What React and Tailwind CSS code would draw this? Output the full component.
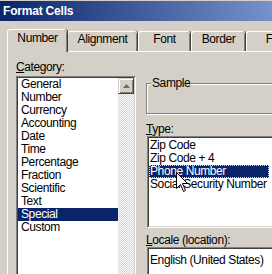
import React from "react";

const categories = [
  "General",
  "Number",
  "Currency",
  "Accounting",
  "Date",
  "Time",
  "Percentage",
  "Fraction",
  "Scientific",
  "Text",
  "Special",
  "Custom",
];

const types = ["Zip Code", "Zip Code + 4", "Phone Number", "Social Security Number"];

function Tab({ label, active, className }) {
  if (active) {
    return (
      <div
        className={`relative z-10 -mb-px h-[23px] shrink-0 rounded-t-[3px] border-l border-t border-white bg-[#d4d0c8] pt-[2px] text-center leading-[13px] shadow-[1px_0_0_#404040,inset_-1px_0_0_#808080] ${className}`}
      >
        {label}
      </div>
    );
  }
  return (
    <div
      className={`h-[20px] shrink-0 rounded-t-[3px] border-l border-t border-white pt-[1px] text-center leading-[13px] shadow-[1px_0_0_#404040,inset_-1px_0_0_#808080] ${className}`}
    >
      {label}
    </div>
  );
}

// classic sunken frame: dark outer top/left, white outer bottom/right
function Sunken({ className, children }) {
  return (
    <div className={`border border-t-[#808080] border-l-[#808080] border-b-white border-r-white ${className}`}>
      <div className="h-full border border-t-[#404040] border-l-[#404040] border-b-[#d4d0c8] border-r-[#d4d0c8] bg-white">
        {children}
      </div>
    </div>
  );
}

export default function App() {
  return (
    <div className="relative h-[274px] w-[272px] overflow-hidden bg-[#d4d0c8] font-['Liberation_Sans',Arial,sans-serif] text-[12px] tracking-[-0.4px] text-black">
      {/* title bar */}
      <div className="mt-px flex h-[20px] items-center bg-[linear-gradient(to_right,#0a246a,#7592ca)] pl-[3px] text-[12px] font-bold tracking-[-0.2px] text-white">
        Format Cells
      </div>

      {/* tabs */}
      <div className="mt-[8px] flex h-[22px] items-end pl-[7px]">
        <Tab label="Number" active className="w-[60px]" />
        <Tab label="Alignment" className="w-[70px]" />
        <Tab label="Font" className="ml-px w-[52px]" />
        <Tab label="Border" className="ml-px w-[54px]" />
        <Tab label="Fill" className="ml-px w-[52px]" />
      </div>

      {/* panel */}
      <div className="ml-[7px] flex h-[260px] w-[300px] border-l border-t border-white">
        <div className="pl-[8px] pt-[8px]">
          <div className="mb-[2px] leading-[14px]">
            <span className="underline">C</span>ategory:
          </div>
          <Sunken className="h-[200px] w-[120px]">
            <div className="flex h-full">
              <div className="w-[100px]">
                {categories.map((c) => (
                  <div
                    key={c}
                    className={`h-[13px] pl-[3px] leading-[13px] ${c === "Special" ? "bg-[#0a246a] text-white" : ""}`}
                  >
                    {c}
                  </div>
                ))}
              </div>
              <div className="h-full w-[16px] bg-[repeating-conic-gradient(#d4d0c8_0%_25%,#ffffff_0%_50%)] bg-[length:2px_2px]">
                <div className="flex h-[16px] w-[16px] items-center justify-center border border-t-[#d4d0c8] border-l-[#d4d0c8] border-b-[#404040] border-r-[#404040] bg-[#d4d0c8] shadow-[inset_1px_1px_0_#ffffff,inset_-1px_-1px_0_#808080]">
                  <svg width="7" height="4" viewBox="0 0 7 4">
                    <path d="M3.5 0 L7 4 L0 4 Z" fill="#6b6b6b" />
                  </svg>
                </div>
              </div>
            </div>
          </Sunken>
        </div>

        <div className="ml-[10px] pt-[31px]">
          <div className="relative h-[31px] w-[160px] border border-[#808080] shadow-[inset_1px_1px_0_#ffffff,1px_1px_0_#ffffff]">
            <span className="absolute left-[4px] top-[-8px] bg-[#d4d0c8] px-px leading-[14px]">Sample</span>
          </div>

          <div className="mt-[9px] leading-[13px]">
            <span className="underline">T</span>ype:
          </div>
          <Sunken className="ml-px h-[92px] w-[160px]">
            <div className="pt-px">
              {types.map((t) => (
                <div
                  key={t}
                  className={`h-[13px] pl-[1px] leading-[13px] ${t === "Phone Number" ? "bg-[#0a246a] text-white outline-1 outline-dotted outline-[#f5db95] -outline-offset-1 w-[120px]" : ""}`}
                >
                  {t}
                </div>
              ))}
            </div>
          </Sunken>

          <div className="mt-[6px] leading-[13px]">
            <span className="underline">L</span>ocale (location):
          </div>
          <Sunken className="ml-px h-[30px] w-[160px]">
            <div className="pl-[1px] pt-[5px] leading-[13px]">English (United States)</div>
          </Sunken>
        </div>
      </div>

      {/* mouse pointer */}
      <svg className="absolute left-[176px] top-[172px]" width="13" height="21" viewBox="0 0 13 21">
        <path
          d="M0.5 0.5 L0.5 16.5 L4.5 12.5 L7.5 19.5 L9.5 18.5 L6.5 11.5 L11.5 11.5 Z"
          fill="#ffffff"
          stroke="#000000"
          strokeWidth="1"
        />
      </svg>
    </div>
  );
}
